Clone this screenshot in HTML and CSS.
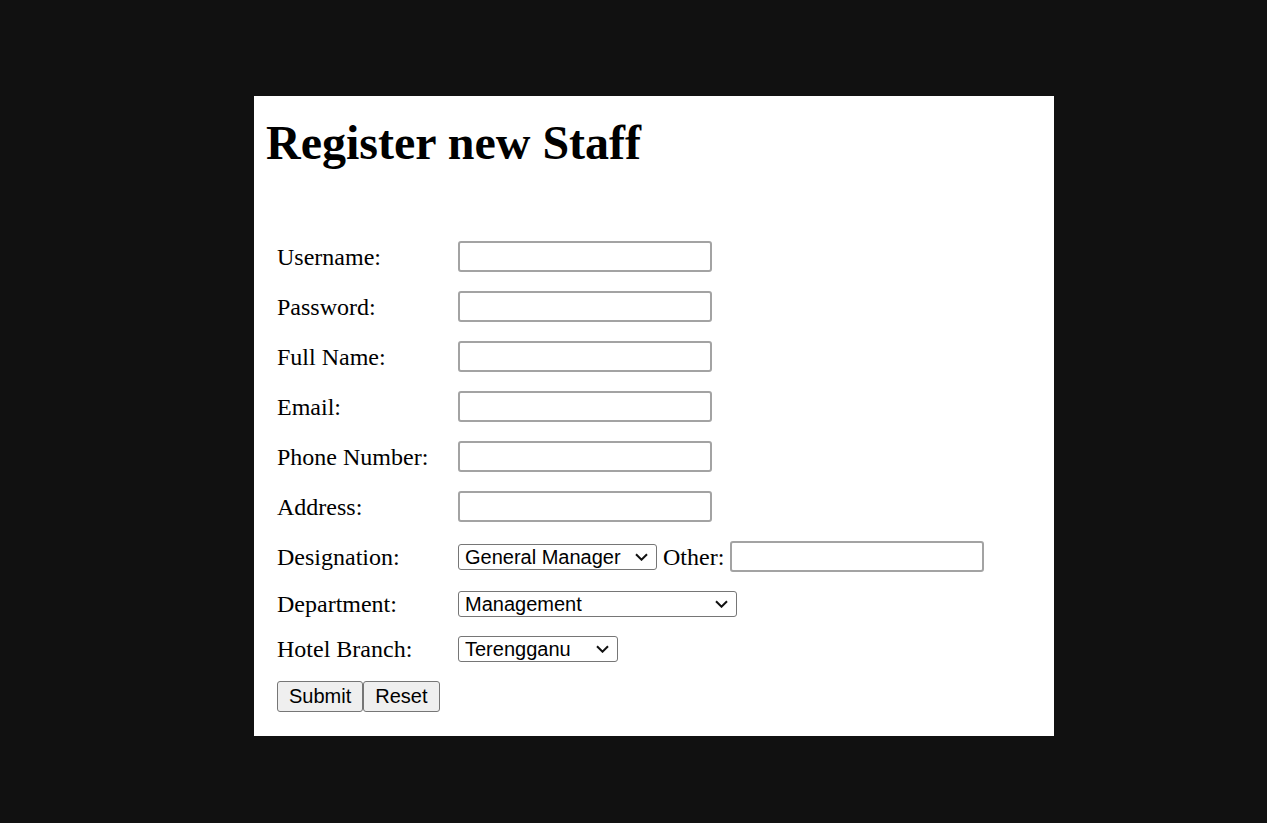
FILE: index.html
```html
<!DOCTYPE html>
<html>
<head>
<meta charset="utf-8">
<title>Register new Staff</title>
<link rel="stylesheet" href="styles.css">
</head>
<body>
<div class="stage">
  <div class="panel">
    <h1 class="title">Register new Staff</h1>
    <form class="form">
      <div class="row"><label class="lbl">Username:</label><div class="ctl"><input class="txt" type="text"></div></div>
      <div class="row"><label class="lbl">Password:</label><div class="ctl"><input class="txt" type="password"></div></div>
      <div class="row"><label class="lbl">Full Name:</label><div class="ctl"><input class="txt" type="text"></div></div>
      <div class="row"><label class="lbl">Email:</label><div class="ctl"><input class="txt" type="text"></div></div>
      <div class="row"><label class="lbl">Phone Number:</label><div class="ctl"><input class="txt" type="text"></div></div>
      <div class="row"><label class="lbl">Address:</label><div class="ctl"><input class="txt" type="text"></div></div>
      <div class="row"><label class="lbl">Designation:</label><div class="ctl inline"><span class="sel-wrap w-des"><select class="sel"><option>General Manager</option></select><svg class="chev" width="13" height="8" viewBox="0 0 13 8"><path d="M1 1.2 L6.5 6.7 L12 1.2" fill="none" stroke="#111" stroke-width="2"/></svg></span><span class="other">Other:</span><input class="txt" type="text"></div></div>
      <div class="row"><label class="lbl">Department:</label><div class="ctl"><span class="sel-wrap w-dep"><select class="sel"><option>Management</option></select><svg class="chev" width="13" height="8" viewBox="0 0 13 8"><path d="M1 1.2 L6.5 6.7 L12 1.2" fill="none" stroke="#111" stroke-width="2"/></svg></span></div></div>
      <div class="row"><label class="lbl">Hotel Branch:</label><div class="ctl"><span class="sel-wrap w-hot"><select class="sel"><option>Terengganu</option></select><svg class="chev" width="13" height="8" viewBox="0 0 13 8"><path d="M1 1.2 L6.5 6.7 L12 1.2" fill="none" stroke="#111" stroke-width="2"/></svg></span></div></div>
      <div class="row btns"><button class="btn" type="button">Submit</button><button class="btn" type="reset">Reset</button></div>
    </form>
  </div>
</div>
</body>
</html>
```

FILE: styles.css
```css
html, body {
  margin: 0;
  padding: 0;
  background: #111111;
}

.stage {
  padding: 96px 0 0 254px;
  min-height: 823px;
  box-sizing: border-box;
}

.panel {
  width: 800px;
  height: 640px;
  box-sizing: border-box;
  background: #ffffff;
  padding: 20px 12px 0 12px;
  font-family: "Liberation Serif", "Times New Roman", serif;
  color: #000;
}

.title {
  margin: 0;
  font-size: 48px;
  line-height: 53px;
  font-weight: bold;
}

.form {
  margin-top: 64px;
  display: flex;
  flex-direction: column;
  gap: 3px;
  padding-left: 11px;
}

.row {
  display: flex;
  align-items: center;
  padding: 8px 0;
}

.lbl {
  width: 181px;
  flex: none;
  font-size: 24px;
  line-height: 26px;
}

.ctl {
  display: flex;
  align-items: center;
}

.txt {
  width: 254px;
  height: 31px;
  box-sizing: border-box;
  border: 2px solid #a3a3a3;
  border-radius: 3px;
  background: #fff;
  margin: 0;
  padding: 1px 3px;
  font-family: "Liberation Sans", Arial, sans-serif;
  font-size: 20px;
}

.other {
  font-size: 24px;
  line-height: 26px;
  margin: 0 6px;
}

.sel-wrap {
  position: relative;
  display: inline-block;
}

.sel {
  -webkit-appearance: none;
  appearance: none;
  height: 26px;
  width: 100%;
  box-sizing: border-box;
  border: 1px solid #767676;
  border-radius: 3px;
  background: #fff;
  color: #000;
  margin: 0;
  padding: 0 0 0 6px;
  font-family: "Liberation Sans", Arial, sans-serif;
  font-size: 20px;
  line-height: 24px;
  display: block;
}

.w-des { width: 199px; }
.w-dep { width: 279px; }
.w-hot { width: 160px; }

.chev {
  position: absolute;
  right: 9px;
  top: 9px;
  pointer-events: none;
}

.btns {
  gap: 0;
}

.btn {
  height: 31px;
  box-sizing: border-box;
  margin: 0;
  padding: 0 11px;
  border: 1px solid #767676;
  border-radius: 3px;
  background: #efefef;
  color: #000;
  font-family: "Liberation Sans", Arial, sans-serif;
  font-size: 20px;
  line-height: 27px;
}
```
